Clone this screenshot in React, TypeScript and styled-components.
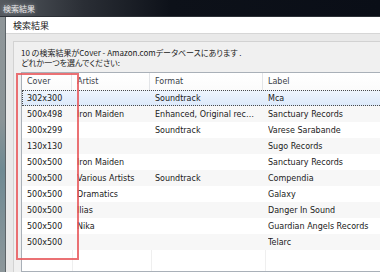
import React from 'react';
import styled, { createGlobalStyle } from 'styled-components';

const GlobalStyle = createGlobalStyle`
  html, body {
    margin: 0;
    padding: 0;
    background: #f0f0f0;
  }
  body {
    width: 380px;
    height: 272px;
    overflow: hidden;
  }
`;

const Screen = styled.div`
  position: relative;
  width: 380px;
  height: 272px;
  overflow: hidden;
  display: flex;
  flex-direction: column;
  font-family: 'DejaVu Sans', 'Noto Sans CJK JP', sans-serif;
`;

const TitleBar = styled.div`
  height: 16px;
  flex: none;
  display: flex;
  align-items: center;
  padding-left: 3px;
  background: linear-gradient(90deg, #555a60 0%, #2a2e35 22%, #0d1119 45%, #0a0e17 100%);
  border-bottom: 1px solid #2c3036;
  color: #e8e8e8;
  font-family: 'Noto Sans CJK JP', sans-serif;
  font-size: 8px;
  text-shadow: 0 0 4px rgba(255, 255, 255, 0.55);
`;

const WindowBody = styled.div`
  flex: 1;
  display: flex;
  min-height: 0;
`;

const Frame = styled.div`
  width: 5px;
  flex: none;
  background: linear-gradient(180deg, #8f9699 0%, #8a9497 40%, #6f8a93 60%, #8d979b 100%);
  border-right: 1px solid #5d6468;
`;

const Main = styled.div`
  flex: 1;
  display: flex;
  flex-direction: column;
  min-width: 0;
`;

const DialogHeader = styled.div`
  height: 16px;
  flex: none;
  display: flex;
  align-items: center;
  padding-left: 7px;
  background: #ffffff;
  border-bottom: 1px solid #d6d6d6;
  font-family: 'Noto Sans CJK JP', sans-serif;
  font-size: 9px;
  color: #1a1a1a;
`;

const Content = styled.div`
  flex: 1;
  background: #e9e9e9;
  padding: 7px 0 0 7px;
  display: flex;
  min-height: 0;
`;

const Panel = styled.div`
  flex: 1;
  background: #f0f0f0;
  border-top: 1px solid #d2d2d2;
  border-left: 1px solid #d2d2d2;
  padding: 6px 0 0 7px;
  display: flex;
  flex-direction: column;
  min-height: 0;
`;

const Message = styled.div`
  font-family: 'Noto Sans CJK JP', sans-serif;
  font-feature-settings: 'palt';
  font-size: 8px;
  line-height: 10px;
  color: #222;
  white-space: nowrap;
`;

const ListView = styled.div`
  margin-top: 4px;
  width: 420px;
  flex: 1;
  background: #ffffff;
  border: 1px solid #a9b0b8;
  border-right: none;
  position: relative;
  font-size: 8px;
  color: #111;
`;

const GridLines = styled.div`
  position: absolute;
  inset: 0;
  display: flex;
  pointer-events: none;
`;

const GridColumn = styled.div<{ $w: number }>`
  width: ${(p) => p.$w}px;
  flex: none;
  border-right: 1px solid #efefef;
`;

const Row = styled.div<{ $header?: boolean; $alt?: boolean; $selected?: boolean }>`
  position: relative;
  display: flex;
  height: ${(p) => (p.$header ? 17 : 16)}px;
  align-items: center;
  background: ${(p) =>
    p.$selected
      ? 'linear-gradient(180deg, #eef5fd 0%, #dce9fa 100%)'
      : p.$header
      ? 'linear-gradient(180deg, #ffffff 0%, #fbfbfb 100%)'
      : p.$alt
      ? '#f7f7f7'
      : '#ffffff'};
  color: ${(p) => (p.$header ? '#3a3f48' : '#1a1a1a')};
  outline: ${(p) => (p.$selected ? '1px dotted #4a4a4a' : 'none')};
  outline-offset: -1px;
`;

const Cell = styled.div<{ $w: number; $header?: boolean }>`
  width: ${(p) => p.$w}px;
  flex: none;
  height: 100%;
  display: flex;
  align-items: center;
  padding-left: 5px;
  box-sizing: border-box;
  overflow: hidden;
  white-space: nowrap;
  border-right: ${(p) => (p.$header ? '1px solid #e3e5e8' : '1px solid transparent')};
`;

const CellText = styled.span`
  overflow: hidden;
  text-overflow: ellipsis;
  padding-right: 4px;
`;

const Highlight = styled.div`
  position: absolute;
  left: 16px;
  top: 73px;
  width: 59px;
  height: 183px;
  border: 2px solid rgba(232, 88, 92, 0.85);
  pointer-events: none;
`;

const widths = [50, 78, 113, 160];

const rows: string[][] = [
  ['302x300', '', 'Soundtrack', 'Mca'],
  ['500x498', 'Iron Maiden', 'Enhanced, Original recording', 'Sanctuary Records'],
  ['300x299', '', 'Soundtrack', 'Varese Sarabande'],
  ['130x130', '', '', 'Sugo Records'],
  ['500x500', 'Iron Maiden', '', 'Sanctuary Records'],
  ['500x500', 'Various Artists', 'Soundtrack', 'Compendia'],
  ['500x500', 'Dramatics', '', 'Galaxy'],
  ['500x500', 'Ilias', '', 'Danger In Sound'],
  ['500x500', 'Nika', '', 'Guardian Angels Records'],
  ['500x500', '', '', 'Telarc'],
];

export default function App() {
  return (
    <>
      <GlobalStyle />
      <Screen>
        <TitleBar>検索結果</TitleBar>
        <WindowBody>
          <Frame />
          <Main>
            <DialogHeader>検索結果</DialogHeader>
            <Content>
              <Panel>
                <Message>10 の検索結果がCover - Amazon.comデータベースにあります .</Message>
                <Message>どれか一つを選んでください:</Message>
                <ListView>
                  <GridLines>
                    {widths.map((w, i) => (
                      <GridColumn key={i} $w={w} />
                    ))}
                  </GridLines>
                  <Row $header>
                    {['Cover', 'Artist', 'Format', 'Label'].map((h, i) => (
                      <Cell key={h} $w={widths[i]} $header>
                        <CellText>{h}</CellText>
                      </Cell>
                    ))}
                  </Row>
                  {rows.map((r, ri) => (
                    <Row key={ri} $selected={ri === 0} $alt={ri % 2 === 1}>
                      {r.map((c, ci) => (
                        <Cell key={ci} $w={widths[ci]}>
                          <CellText>{c}</CellText>
                        </Cell>
                      ))}
                    </Row>
                  ))}
                </ListView>
              </Panel>
            </Content>
          </Main>
        </WindowBody>
        <Highlight />
      </Screen>
    </>
  );
}
